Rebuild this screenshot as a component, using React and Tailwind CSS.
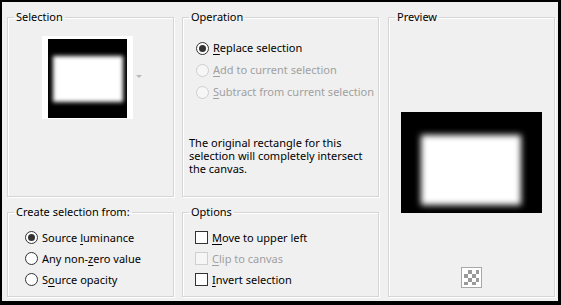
import React from 'react'

const box = 'border border-[#d5d5d5] shadow-[inset_1px_1px_0_#ffffff,1px_1px_0_#ffffff] min-w-0'

function Legend({ children }) {
  return <legend className="ml-[6px] px-[2px] leading-[16px] text-black">{children}</legend>
}

function Radio({ checked, disabled, h, children }) {
  return (
    <div className={`flex items-center ${h === 21 ? 'h-[21px]' : 'h-[22px]'}`}>
      <span
        className={`w-[13px] h-[13px] shrink-0 rounded-full border flex items-center justify-center ${
          disabled ? 'border-[#cfcfcf] bg-[#f6f6f6]' : 'border-[#333333] bg-white'
        }`}
      >
        {checked && <span className="w-[7px] h-[7px] rounded-full bg-[#333333]" />}
      </span>
      <span className={`ml-[4px] whitespace-nowrap ${disabled ? 'text-[#a0a0a0]' : 'text-black'}`}>{children}</span>
    </div>
  )
}

function Check({ disabled, children }) {
  return (
    <div className="flex items-center h-[21px]">
      <span
        className={`w-[13px] h-[13px] shrink-0 border ${
          disabled ? 'border-[#cfcfcf] bg-[#f6f6f6]' : 'border-[#333333] bg-white'
        }`}
      />
      <span className={`ml-[4px] whitespace-nowrap ${disabled ? 'text-[#a0a0a0]' : 'text-black'}`}>{children}</span>
    </div>
  )
}

const U = ({ children }) => <span className="underline underline-offset-2">{children}</span>

export default function App() {
  return (
    <div className="w-[561px] h-[305px] box-border border-black border-t-2 border-l-2 border-r-[3px] border-b-[4px] bg-[#f0f0f0] pl-[5px] pt-[7px] flex font-['Noto_Sans','Segoe_UI',sans-serif] text-[11px] leading-[16px]">
      {/* left column */}
      <div className="w-[167px] flex flex-col">
        <fieldset className={`${box} h-[188px]`}>
          <Legend>Selection</Legend>
          <div className="flex items-start mt-[11px] ml-[34px]">
            <div className="bg-white px-[6px] pt-[3px] pb-[1px]">
              <div className="w-[79px] h-[79px] bg-black overflow-hidden pt-[17px] pl-[5px]">
                <div className="w-[70px] h-[46px] bg-white blur-[2px]" />
              </div>
            </div>
            <svg className="ml-[3px] mt-[39px]" width="6" height="4" viewBox="0 0 6 4">
              <path d="M0 0h6L3 3z" fill="#b8b8b8" />
            </svg>
          </div>
        </fieldset>
        <fieldset className={`${box} h-[93px] mt-[7px]`}>
          <Legend>Create selection from:</Legend>
          <div className="pt-[7px] pl-[17px]">
            <Radio checked h={21}>Source <U>l</U>uminance</Radio>
            <Radio h={21}>Any non-<U>z</U>ero value</Radio>
            <Radio h={21}>S<U>o</U>urce opacity</Radio>
          </div>
        </fieldset>
      </div>

      {/* middle column */}
      <div className="w-[197px] ml-[8px] flex flex-col">
        <fieldset className={`${box} h-[188px]`}>
          <Legend>Operation</Legend>
          <div className="pt-[12px] pl-[13px]">
            <Radio checked><U>R</U>eplace selection</Radio>
            <Radio disabled><U>A</U>dd to current selection</Radio>
            <Radio disabled><U>S</U>ubtract from current selection</Radio>
          </div>
          <p className="mt-[33px] pl-[6px] leading-[13px] text-black whitespace-nowrap">
            The original rectangle for this
            <br />
            selection will completely intersect
            <br />
            the canvas.
          </p>
        </fieldset>
        <fieldset className={`${box} h-[93px] mt-[7px]`}>
          <Legend>Options</Legend>
          <div className="pt-[7px] pl-[12px]">
            <Check><U>M</U>ove to upper left</Check>
            <Check disabled><U>C</U>lip to canvas</Check>
            <Check><U>I</U>nvert selection</Check>
          </div>
        </fieldset>
      </div>

      {/* preview */}
      <fieldset className={`${box} w-[167px] h-[288px] ml-[9px] flex flex-col items-center`}>
        <Legend>Preview</Legend>
        <div className="mt-[87px] w-[141px] h-[101px] bg-black overflow-hidden pt-[23px] pl-[20px]">
          <div className="w-[100px] h-[70px] bg-white blur-[3px]" />
        </div>
        <div className="mt-[54px] w-[21px] h-[21px] border border-[#a8a8a8] bg-white p-[2px]">
          <div className="w-full h-full bg-[conic-gradient(#9a9a9a_25%,#ffffff_0_50%,#9a9a9a_0_75%,#ffffff_0)] bg-[length:8px_8px]" />
        </div>
      </fieldset>
    </div>
  )
}
